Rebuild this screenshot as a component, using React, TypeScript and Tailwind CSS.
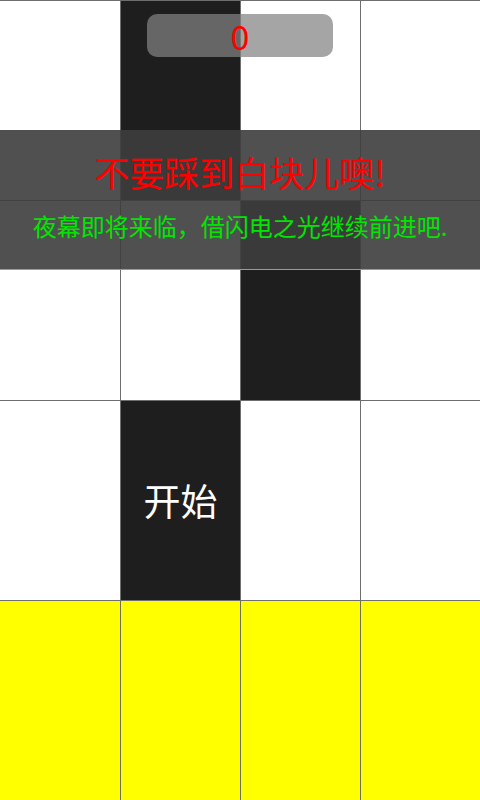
const rows: ("w" | "b" | "y")[][] = [
  ["w", "b", "w", "w"],
  ["w", "w", "b", "w"],
  ["w", "b", "w", "w"],
  ["y", "y", "y", "y"],
];

const cellColor = { w: "bg-white", b: "bg-[#1e1e1e]", y: "bg-[#ffff00]" };

export default function App() {
  return (
    <div
      className="relative h-[800px] w-[480px] overflow-hidden bg-white"
      style={{ fontFamily: '"Noto Sans CJK SC", "Noto Sans", sans-serif' }}
    >
      <div className="grid grid-cols-4">
        {rows.map((row, r) =>
          row.map((c, i) => (
            <div
              key={`${r}-${i}`}
              className={`flex h-[200px] items-center justify-center border-t border-[#6e6e6e] ${
                i > 0 ? "border-l" : ""
              } ${cellColor[c]}`}
            >
              {r === 2 && i === 1 && (
                <span className="text-[37px] leading-none text-white">开始</span>
              )}
            </div>
          ))
        )}
      </div>

      {/* score */}
      <div className="absolute left-[147px] top-[14px] flex h-[43px] w-[186px] items-center justify-center rounded-[10px] bg-[rgba(130,130,130,0.72)]">
        <span className="text-[34px] leading-none text-[#ff0000]">0</span>
      </div>

      {/* tip overlay */}
      <div className="absolute left-0 top-[130px] flex h-[140px] w-[480px] flex-col items-center border-b border-[#9a9a9a] bg-[rgba(61,61,61,0.9)]">
        <div className="mt-[24px] text-[35px] leading-none text-[#ff0000]">不要踩到白块儿噢!</div>
        <div className="mt-[25px] text-[24px] leading-none text-[#00e600]">
          夜幕即将来临，借闪电之光继续前进吧.
        </div>
      </div>
    </div>
  );
}
